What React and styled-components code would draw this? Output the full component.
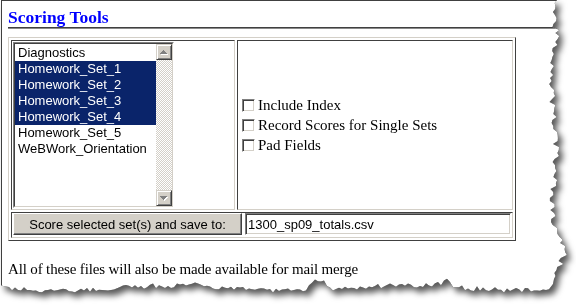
import React from "react";
import styled, { createGlobalStyle } from "styled-components";

const GlobalStyle = createGlobalStyle`
  body {
    margin: 0;
    background: #fff;
    font-family: "Liberation Serif", "Times New Roman", serif;
  }
`;

// jagged "torn paper" outline for the right and bottom edges
const rnd = (i) => {
  const x = Math.sin(i * 12.9898) * 43758.5453;
  return x - Math.floor(x);
};

const tornEdge = () => {
  const pts = ["0px 0px", "556px 0px"];
  for (let y = 3; y < 280; y += 3) {
    let base = 553 + Math.sin(y / 19) * 2;
    if (y > 225 && y < 272) base += Math.sin(((y - 225) / 47) * Math.PI) * 9;
    const x = base + (rnd(y) - 0.5) * 7;
    pts.push(`${x.toFixed(1)}px ${y}px`);
  }
  pts.push("552px 284px");
  for (let x = 548; x >= 0; x -= 3) {
    let base = 288 + Math.sin(x / 37) * 2.5;
    if (Math.abs(x - 318) < 14) base -= (14 - Math.abs(x - 318)) * 0.8;
    if (Math.abs(x - 190) < 10) base -= (10 - Math.abs(x - 190)) * 0.4;
    if (Math.abs(x - 445) < 12) base -= (12 - Math.abs(x - 445)) * 0.5;
    const y = base + (rnd(x + 1000) - 0.5) * 5;
    pts.push(`${x}px ${y.toFixed(1)}px`);
  }
  pts.push("0px 285px");
  return `polygon(${pts.join(",")})`;
};

const TORN = tornEdge();

const Shadow = styled.div`
  width: 576px;
  height: 306px;
  overflow: hidden;
  filter: drop-shadow(0 0 0.6px rgba(0, 0, 0, 0.9))
    drop-shadow(4px 5px 3px rgba(0, 0, 0, 0.65));
`;

const Window = styled.div`
  margin-left: 1px;
  width: 570px;
  height: 300px;
  box-sizing: border-box;
  background: #fff;
  border-top: 1px solid #404040;
  border-left: 1px solid #404040;
  padding-left: 6px;
  clip-path: ${(p) => p.$clip};
`;

const Title = styled.h2`
  margin: 0;
  padding-top: 6px;
  height: 20px;
  line-height: 20px;
  font-size: 17.5px;
  font-weight: bold;
  color: #0000ff;
  border-bottom: 1px solid #404040;
  box-shadow: 0 1px 0 #8a8a8a;
`;

const Frame = styled.div`
  margin-top: 9px;
  width: 508px;
  box-sizing: border-box;
  display: grid;
  grid-template-columns: 224px 276px;
  grid-template-rows: 170px 26px;
  gap: 2px;
  padding: 2px;
  border: 1px solid;
  border-color: #d4d0c8 #404040 #404040 #d4d0c8;
`;

const Cell = styled.div`
  box-sizing: border-box;
  border: 1px solid;
  border-color: #404040 #d4d0c8 #d4d0c8 #404040;
  display: flex;
  flex-direction: ${(p) => (p.$column ? "column" : "row")};
  justify-content: ${(p) => (p.$column ? "center" : "flex-start")};
  align-items: ${(p) => (p.$column ? "flex-start" : p.$top ? "flex-start" : "center")};
  grid-column: ${(p) => (p.$span ? "1 / span 2" : "auto")};
  padding-left: ${(p) => p.$indent || 1}px;
  gap: ${(p) => (p.$top ? "3px" : "0")};
`;

const ListBox = styled.div`
  width: 161px;
  height: 166px;
  box-sizing: border-box;
  border: 1px solid;
  border-color: #808080 #fff #fff #808080;
`;

const ListInner = styled.div`
  height: 100%;
  box-sizing: border-box;
  border: 1px solid;
  border-color: #404040 #d4d0c8 #d4d0c8 #404040;
  display: flex;
  background: #fff;
`;

const Items = styled.div`
  flex: 1;
  padding-top: 1px;
`;

const Option = styled.div`
  height: 16px;
  line-height: 16px;
  padding-left: 3px;
  font-family: "Liberation Sans", Arial, sans-serif;
  font-size: 13px;
  white-space: nowrap;
  background: ${(p) => (p.$selected ? "#0a246a" : "transparent")};
  color: ${(p) => (p.$selected ? "#fff" : "#000")};
`;

const ScrollBar = styled.div`
  width: 16px;
  display: flex;
  flex-direction: column;
  background-image: repeating-conic-gradient(#d4d0c8 0 25%, #fff 0 50%);
  background-size: 2px 2px;
`;

const Track = styled.div`
  flex: 1;
`;

const ScrollButton = styled.div`
  width: 16px;
  height: 16px;
  box-sizing: border-box;
  background: #d4d0c8;
  border: 1px solid;
  border-color: #d4d0c8 #404040 #404040 #d4d0c8;
  box-shadow: inset 1px 1px 0 #fff, inset -1px -1px 0 #808080;
  display: flex;
  align-items: center;
  justify-content: center;
`;

const Arrow = ({ down }) => {
  const rows = [0, 1, 2, 3];
  const rect = (r, dx, fill) => {
    const row = down ? 3 - r : r;
    return (
      <rect
        key={`${fill}${r}`}
        x={3 - row + dx}
        y={r + dx}
        width={row * 2 + 1}
        height={1}
        fill={fill}
      />
    );
  };
  return (
    <svg width="8" height="5" shapeRendering="crispEdges">
      {rows.map((r) => rect(r, 1, "#fff"))}
      {rows.map((r) => rect(r, 0, "#808080"))}
    </svg>
  );
};

const CheckRow = styled.label`
  display: flex;
  align-items: center;
  gap: 3px;
  height: 20px;
  font-size: 15px;
  color: #000;
`;

const Box = styled.input.attrs({ type: "checkbox" })`
  appearance: none;
  margin: 0;
  width: 13px;
  height: 13px;
  box-sizing: border-box;
  background: #fff;
  border: 1px solid;
  border-color: #808080 #fff #fff #808080;
  box-shadow: inset 1px 1px 0 #404040, inset -1px -1px 0 #d4d0c8;
`;

const Button = styled.button`
  width: 229px;
  height: 22px;
  margin: 0;
  padding: 0;
  box-sizing: border-box;
  background: #d4d0c8;
  border: 1px solid;
  border-color: #fff #404040 #404040 #fff;
  box-shadow: inset -1px -1px 0 #808080;
  font-family: "Liberation Sans", Arial, sans-serif;
  font-size: 13px;
  color: #000;
`;

const TextField = styled.input`
  width: 266px;
  height: 22px;
  margin: 0;
  padding: 0 2px;
  box-sizing: border-box;
  border: 1px solid;
  border-color: #808080 #fff #fff #808080;
  box-shadow: inset 1px 1px 0 #404040, inset -1px -1px 0 #d4d0c8;
  font-family: "Liberation Sans", Arial, sans-serif;
  font-size: 13px;
  color: #000;
  outline: none;
`;

const Note = styled.p`
  margin: 19px 0 0;
  line-height: 18px;
  font-size: 15px;
  letter-spacing: -0.15px;
  color: #000;
`;

const sets = [
  { name: "Diagnostics" },
  { name: "Homework_Set_1", selected: true },
  { name: "Homework_Set_2", selected: true },
  { name: "Homework_Set_3", selected: true },
  { name: "Homework_Set_4", selected: true },
  { name: "Homework_Set_5" },
  { name: "WeBWork_Orientation" },
];

const options = ["Include Index", "Record Scores for Single Sets", "Pad Fields"];

const App = () => {
  return (
    <>
      <GlobalStyle />
      <Shadow>
        <Window $clip={TORN}>
          <Title>Scoring Tools</Title>
          <Frame>
            <Cell>
              <ListBox>
                <ListInner>
                  <Items>
                    {sets.map((s) => (
                      <Option key={s.name} $selected={s.selected}>
                        {s.name}
                      </Option>
                    ))}
                  </Items>
                  <ScrollBar>
                    <ScrollButton>
                      <Arrow />
                    </ScrollButton>
                    <Track />
                    <ScrollButton>
                      <Arrow down />
                    </ScrollButton>
                  </ScrollBar>
                </ListInner>
              </ListBox>
            </Cell>
            <Cell $column $indent={4}>
              {options.map((o) => (
                <CheckRow key={o}>
                  <Box />
                  {o}
                </CheckRow>
              ))}
            </Cell>
            <Cell $span $top>
              <Button>Score selected set(s) and save to:</Button>
              <TextField defaultValue="1300_sp09_totals.csv" />
            </Cell>
          </Frame>
          <Note>All of these files will also be made available for mail merge</Note>
        </Window>
      </Shadow>
    </>
  );
};

export default App;
